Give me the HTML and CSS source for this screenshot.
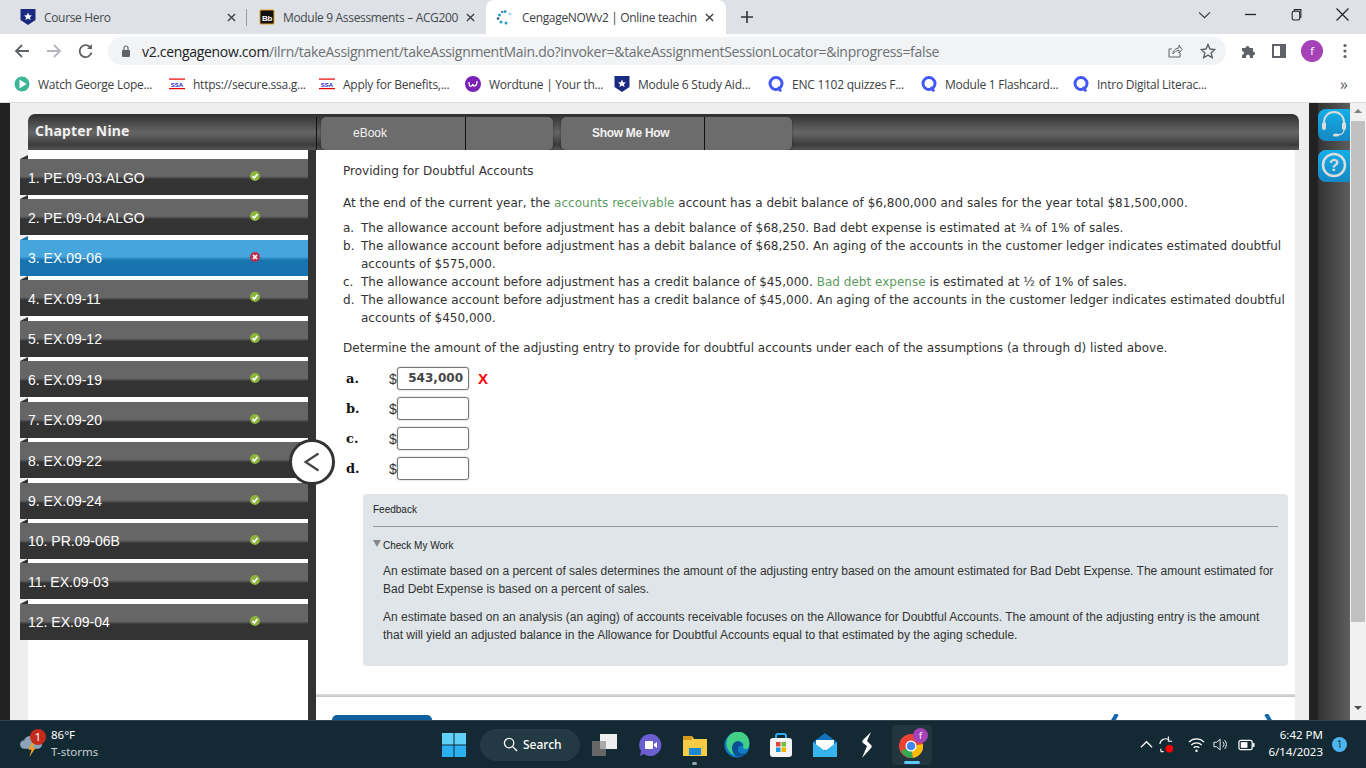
FILE: index.html
```html
<!DOCTYPE html>
<html lang="en">
<head>
<meta charset="utf-8">
<title>CengageNOWv2 | Online teaching</title>
<link rel="stylesheet" href="styles.css">
</head>
<body>
<svg class="defs" width="0" height="0">
  <symbol id="shield" viewBox="0 0 16 16"><path d="M0.500 0h15v11l-7.500 5-7.500-5z" fill="#1a2a80"/><path d="M8 3.500l1.200 2.700 2.800.2-2.100 1.900.7 2.800L8 9.600l-2.600 1.500.7-2.800-2.100-1.900 2.800-.2z" fill="#fff"/></symbol>
  <symbol id="quiz" viewBox="0 0 16 16"><circle cx="8" cy="7.500" r="6" fill="none" stroke="#4257f5" stroke-width="3"/><path d="M10 11l3 4.500" stroke="#4257f5" stroke-width="2.500"/></symbol>
  <symbol id="ok" viewBox="0 0 10 10"><circle cx="5" cy="5" r="5" fill="#8cb43c"/><path d="M2.500 5.200l1.800 1.800 3.200-4" fill="none" stroke="#fff" stroke-width="1.800"/></symbol>
  <symbol id="bad" viewBox="0 0 10 10"><circle cx="5" cy="5" r="5" fill="#b8304e"/><path d="M3 3l4 4M7 3l-4 4" fill="none" stroke="#fff" stroke-width="1.600"/></symbol>
</svg>

<div class="browser">
  <header class="tabstrip">
    <div class="tab tab-first">
      <svg class="ico16"><use href="#shield"/></svg>
      <span class="tab-title">Course Hero</span>
      <svg class="tab-x" viewBox="0 0 10 10"><path d="M1 1l8 8M9 1l-8 8" stroke="#3c4043" stroke-width="1.500"/></svg>
    </div>
    <div class="tab tab-second">
      <svg class="ico16" viewBox="0 0 16 16"><rect x="1" y="1" width="14" height="14" rx="1" fill="#111" stroke="#e0a020"/><text x="8" y="11.500" class="bb-text">Bb</text></svg>
      <span class="tab-title">Module 9 Assessments – ACG200</span>
      <svg class="tab-x" viewBox="0 0 10 10"><path d="M1 1l8 8M9 1l-8 8" stroke="#3c4043" stroke-width="1.500"/></svg>
    </div>
    <div class="tab tab-active">
      <svg class="ico16" viewBox="0 0 16 16"><g fill="#2a9ccf"><circle cx="9" cy="2.500" r="1.500"/><circle cx="14" cy="5" r="1.300" fill="#8fd0ea"/><circle cx="3.500" cy="6" r="1.500"/><circle cx="2" cy="9.500" r="1.200" fill="#14506e"/><circle cx="5" cy="13" r="1.500"/><circle cx="10" cy="14" r="1.500"/><circle cx="6" cy="3" r="1" fill="#14506e"/></g></svg>
      <span class="tab-title">CengageNOWv2 | Online teachin</span>
      <svg class="tab-x" viewBox="0 0 10 10"><path d="M1 1l8 8M9 1l-8 8" stroke="#3c4043" stroke-width="1.500"/></svg>
    </div>
    <svg class="newtab" viewBox="0 0 12 12"><path d="M6 0v12M0 6h12" stroke="#333" stroke-width="1.600"/></svg>
    <div class="winctl">
      <svg class="win-ic" viewBox="0 0 12 12"><path d="M1 4l5 5 5-5" fill="none" stroke="#333"/></svg>
      <svg class="win-ic" viewBox="0 0 12 12"><path d="M1 6h10" stroke="#222" stroke-width="1.200"/></svg>
      <svg class="win-ic" viewBox="0 0 12 12"><rect x="2" y="3" width="7" height="8" rx="1.500" fill="none" stroke="#222"/><path d="M4 3V1.500h6v7H9" fill="none" stroke="#222"/></svg>
      <svg class="win-ic" viewBox="0 0 12 12"><path d="M0.500 .5l11 11M11.500 .5l-11 11" stroke="#222" stroke-width="1.100"/></svg>
    </div>
  </header>

  <nav class="toolbar">
    <svg class="tool-ic" viewBox="0 0 16 16"><path d="M15 8H2M8 2L2 8l6 6" fill="none" stroke="#5f6368" stroke-width="1.800"/></svg>
    <svg class="tool-ic" viewBox="0 0 16 16"><path d="M1 8h13M8 2l6 6-6 6" fill="none" stroke="#b4b7bb" stroke-width="1.800"/></svg>
    <svg class="tool-ic" viewBox="0 0 16 16"><path d="M13.500 9.500A6 6 0 1 1 12 4" fill="none" stroke="#5f6368" stroke-width="1.800"/><path d="M14 1v5H9z" fill="#5f6368"/></svg>
    <div class="omnibox">
      <svg class="lock" viewBox="0 0 10 12"><rect x="1" y="5" width="8" height="7" rx="1" fill="#5f6368"/><path d="M3 5V3a2 2 0 0 1 4 0v2" fill="none" stroke="#5f6368" stroke-width="1.200"/></svg>
      <span class="url"><span class="url-host">v2.cengagenow.com</span>/ilrn/takeAssignment/takeAssignmentMain.do?invoker=&amp;takeAssignmentSessionLocator=&amp;inprogress=false</span>
      <svg class="omni-share" viewBox="0 0 16 16"><path d="M5 6H2v8h11v-4" fill="none" stroke="#5f6368"/><path d="M6 11c0-4 3-6 6-6V2l3 4.500L12 10V7.500C9.500 7.500 7.500 8.500 6 11z" fill="none" stroke="#5f6368"/></svg>
      <svg class="omni-star" viewBox="0 0 16 16"><path d="M8 1.500l2 4.500 4.800.5-3.600 3.200 1 4.800L8 12.100 3.800 14.500l1-4.800L1.200 6.500 6 6z" fill="none" stroke="#5f6368" stroke-width="1.400"/></svg>
    </div>
    <svg class="ext-puzzle" viewBox="0 0 16 16"><path d="M2 5h3.500a2 2 0 1 1 4 0H13v3.500a2 2 0 1 1 0 4V15H9.500a2 2 0 1 0-3 0H2v-3a2 2 0 1 0 0-4z" fill="#5f6368"/></svg>
    <svg class="ext-panel" viewBox="0 0 14 14"><path d="M1 1h12v12H1z" fill="none" stroke="#5f6368" stroke-width="2"/><rect x="8" y="1" width="5" height="12" fill="#5f6368"/></svg>
    <span class="avatar">f</span>
    <svg class="dots" viewBox="0 0 4 16"><circle cx="2" cy="2.500" r="1.600" fill="#5f6368"/><circle cx="2" cy="8" r="1.600" fill="#5f6368"/><circle cx="2" cy="13.500" r="1.600" fill="#5f6368"/></svg>
  </nav>

  <nav class="bookmarks">
    <span class="bm bm-1"><svg class="ico16" viewBox="0 0 16 16"><circle cx="8" cy="8" r="7.500" fill="#3fb598"/><path d="M5.500 3.500L12.500 8l-7 4.500z" fill="#fff"/></svg>Watch George Lope...</span>
    <span class="bm bm-2"><svg class="ico16" viewBox="0 0 16 16"><rect x="0" y="2.500" width="16" height="1.200" fill="#e00"/><rect x="0" y="12" width="16" height="1.200" fill="#e00"/><text x="8" y="10.800" class="ssa-text">SSA</text></svg>https://secure.ssa.g...</span>
    <span class="bm bm-3"><svg class="ico16" viewBox="0 0 16 16"><rect x="0" y="2.500" width="16" height="1.200" fill="#e00"/><rect x="0" y="12" width="16" height="1.200" fill="#e00"/><text x="8" y="10.800" class="ssa-text">SSA</text></svg>Apply for Benefits,...</span>
    <span class="bm bm-4"><svg class="ico16" viewBox="0 0 16 16"><circle cx="8" cy="8" r="8" fill="#7a22b8"/><path d="M4 6c0 6 3 5 4 2 0 3 4 3 4-3" fill="none" stroke="#fff" stroke-width="1.300"/></svg>Wordtune | Your th...</span>
    <span class="bm bm-5"><svg class="ico16"><use href="#shield"/></svg>Module 6 Study Aid...</span>
    <span class="bm bm-6"><svg class="ico16"><use href="#quiz"/></svg>ENC 1102 quizzes F...</span>
    <span class="bm bm-7"><svg class="ico16"><use href="#quiz"/></svg>Module 1 Flashcard...</span>
    <span class="bm bm-8"><svg class="ico16"><use href="#quiz"/></svg>Intro Digital Literac...</span>
    <span class="bm-more">»</span>
  </nav>

  <main class="page">
    <div class="edge-left"></div>
    <div class="app">
      <div class="app-head">
        <h1 class="chapter">Chapter Nine</h1>
        <div class="head-tabs">
          <div class="tool-group"><span class="tool-label">eBook</span><span class="tool-rest"></span></div>
          <div class="tool-group"><span class="tool-label tool-label-wide">Show Me How</span><span class="tool-rest"></span></div>
        </div>
      </div>
      <div class="app-body">
        <aside class="sidebar">
          <div class="item"><span>1. PE.09-03.ALGO</span><svg class="status"><use href="#ok"/></svg></div>
          <div class="item"><span>2. PE.09-04.ALGO</span><svg class="status"><use href="#ok"/></svg></div>
          <div class="item item-current"><span>3. EX.09-06</span><svg class="status"><use href="#bad"/></svg></div>
          <div class="item"><span>4. EX.09-11</span><svg class="status"><use href="#ok"/></svg></div>
          <div class="item"><span>5. EX.09-12</span><svg class="status"><use href="#ok"/></svg></div>
          <div class="item"><span>6. EX.09-19</span><svg class="status"><use href="#ok"/></svg></div>
          <div class="item"><span>7. EX.09-20</span><svg class="status"><use href="#ok"/></svg></div>
          <div class="item"><span>8. EX.09-22</span><svg class="status"><use href="#ok"/></svg></div>
          <div class="item"><span>9. EX.09-24</span><svg class="status"><use href="#ok"/></svg></div>
          <div class="item"><span>10. PR.09-06B</span><svg class="status"><use href="#ok"/></svg></div>
          <div class="item"><span>11. EX.09-03</span><svg class="status"><use href="#ok"/></svg></div>
          <div class="item"><span>12. EX.09-04</span><svg class="status"><use href="#ok"/></svg></div>
        </aside>
        <section class="content">
          <p class="title">Providing for Doubtful Accounts</p>
          <p class="intro">At the end of the current year, the <span class="term">accounts receivable</span> account has a debit balance of $6,800,000 and sales for the year total $81,500,000.</p>
          <ol class="assume">
            <li><span class="mk">a.</span><span>The allowance account before adjustment has a debit balance of $68,250. Bad debt expense is estimated at ¾ of 1% of sales.</span></li>
            <li><span class="mk">b.</span><span>The allowance account before adjustment has a debit balance of $68,250. An aging of the accounts in the customer ledger indicates estimated doubtful accounts of $575,000.</span></li>
            <li><span class="mk">c.</span><span>The allowance account before adjustment has a credit balance of $45,000. <span class="term">Bad debt expense</span> is estimated at ½ of 1% of sales.</span></li>
            <li><span class="mk">d.</span><span>The allowance account before adjustment has a credit balance of $45,000. An aging of the accounts in the customer ledger indicates estimated doubtful accounts of $450,000.</span></li>
          </ol>
          <p class="determine">Determine the amount of the adjusting entry to provide for doubtful accounts under each of the assumptions (a through d) listed above.</p>
          <div class="answers">
            <div class="answer"><b class="ans-key">a.</b><span class="dollar">$</span><span class="field field-filled">543,000</span><b class="wrong">X</b></div>
            <div class="answer"><b class="ans-key">b.</b><span class="dollar">$</span><span class="field"></span></div>
            <div class="answer"><b class="ans-key">c.</b><span class="dollar">$</span><span class="field"></span></div>
            <div class="answer"><b class="ans-key">d.</b><span class="dollar">$</span><span class="field"></span></div>
          </div>
          <div class="feedback">
            <div class="fb-head">Feedback</div>
            <div class="fb-check"><span class="tri"></span>Check My Work</div>
            <p class="fb-p">An estimate based on a percent of sales determines the amount of the adjusting entry based on the amount estimated for Bad Debt Expense. The amount estimated for Bad Debt Expense is based on a percent of sales.</p>
            <p class="fb-p">An estimate based on an analysis (an aging) of accounts receivable focuses on the Allowance for Doubtful Accounts. The amount of the adjusting entry is the amount that will yield an adjusted balance in the Allowance for Doubtful Accounts equal to that estimated by the aging schedule.</p>
          </div>
          <div class="footer-rule"></div>
          <div class="footer-row">
            <span class="footer-btn"></span>
            <span class="footer-nav">
              <svg class="chev" viewBox="0 0 10 10"><path d="M8 0L2 10" stroke="#1268ae" stroke-width="4"/></svg>
              <svg class="chev" viewBox="0 0 10 10"><path d="M2 0l6 10" stroke="#1268ae" stroke-width="4"/></svg>
            </span>
          </div>
        </section>
      </div>
      <button class="collapse" aria-label="Collapse"><svg viewBox="0 0 20 20"><path d="M16.500 1.500L3.500 10l13 8.500" fill="none" stroke="#444" stroke-width="2.200"/></svg></button>
    </div>
    <div class="rail">
      <div class="rail-btn"><svg viewBox="0 0 32 32"><path d="M6 17v-4a10 10 0 0 1 20 0v4" fill="none" stroke="#ddd" stroke-width="1.800"/><rect x="4" y="13" width="4" height="8" rx="2" fill="#ddd"/><rect x="24" y="13" width="4" height="8" rx="2" fill="#ddd"/><path d="M26 21c0 3-3 5-7 5" fill="none" stroke="#ddd" stroke-width="1.300"/><ellipse cx="18" cy="26" rx="3" ry="1.600" fill="#ddd"/></svg></div>
      <div class="rail-btn"><svg viewBox="0 0 32 32"><circle cx="16" cy="15" r="11" fill="none" stroke="#ddd" stroke-width="2.500"/><text x="16" y="21" class="q-text">?</text></svg></div>
    </div>
    <div class="scrollbar">
      <span class="sb-up"></span>
      <span class="sb-thumb"></span>
      <span class="sb-down"></span>
    </div>
  </main>

  <footer class="taskbar">
    <div class="weather">
      <svg class="weather-ic" viewBox="0 0 24 24"><path d="M5 16a4 4 0 0 1 0-8 6 6 0 0 1 11-1 4.500 4.500 0 0 1 3 9z" fill="#8aa3b8"/><path d="M13 9l-4 8h3l-2 7 6-9h-3l2-6z" fill="#f0a020"/></svg>
      <span class="weather-badge">1</span>
      <div class="weather-text"><span class="temp">86°F</span><span class="cond">T-storms</span></div>
    </div>
    <div class="tb-center">
      <svg class="tb-win" viewBox="0 0 24 24"><g fill="#5fd0f8"><rect x="0" y="0" width="11.500" height="11.500"/><rect x="12.500" y="0" width="11.500" height="11.500"/></g><g fill="#2ab0f0"><rect x="0" y="12.500" width="11.500" height="11.500"/><rect x="12.500" y="12.500" width="11.500" height="11.500"/></g></svg>
      <div class="tb-search"><svg viewBox="0 0 16 16"><circle cx="6.500" cy="6.500" r="5" fill="none" stroke="#fff" stroke-width="1.400"/><path d="M10 10l5 5" stroke="#fff" stroke-width="1.500"/></svg><span>Search</span></div>
      <svg class="tb-ic tb-task" viewBox="0 0 26 24"><rect x="0" y="8" width="14" height="15" fill="#666"/><rect x="8" y="1" width="17" height="15" fill="#eee"/><rect x="8" y="8" width="6" height="8" fill="#aaa"/></svg>
      <svg class="tb-ic tb-meet" viewBox="0 0 24 24"><path d="M12 1a11 11 0 1 1-6 20l-4 2 1-5A11 11 0 0 1 12 1z" fill="#6b5fd0"/><rect x="7" y="8" width="8" height="8" rx="1" fill="#fff"/><path d="M16 11l3-2v6l-3-2z" fill="#fff"/></svg>
      <span class="tb-folder">
        <svg class="tb-ic tb-explorer" viewBox="0 0 26 24"><path d="M1 3h9l2 3h13v17H1z" fill="#f7cc45"/><rect x="1" y="3" width="9" height="4" fill="#d59a1e"/><rect x="7" y="15" width="12" height="7" fill="#1a88d8"/></svg>
        <span class="folder-dot"></span>
      </span>
      <svg class="tb-ic tb-edge" viewBox="0 0 26 26"><circle cx="13" cy="13" r="12.500" fill="#0f7cc8"/><path d="M3 8a11 11 0 0 1 22 6c0 3-4 4-6 2 2-5-3-8-7-6-5 2-5 9-1 13C5 22 1 14 3 8z" fill="#42d087"/><path d="M11 10c-4 3-4 10 1 14 4 1 8 0 11-3-5 2-10 0-9-5 1-3 3-3 5-2-1-3-5-6-8-4z" fill="#0c4f96"/></svg>
      <svg class="tb-ic tb-store" viewBox="0 0 24 26"><path d="M7 7V4a2 2 0 0 1 2-2h6a2 2 0 0 1 2 2v3" fill="none" stroke="#2ab0f0" stroke-width="2"/><rect x="1" y="6" width="22" height="19" rx="3" fill="#f4f4f4"/><rect x="7" y="10" width="4.500" height="4.500" fill="#ea4335"/><rect x="12.500" y="10" width="4.500" height="4.500" fill="#6bbf3a"/><rect x="7" y="15.500" width="4.500" height="4.500" fill="#1a98e0"/><rect x="12.500" y="15.500" width="4.500" height="4.500" fill="#f7b500"/></svg>
      <svg class="tb-ic tb-mail" viewBox="0 0 26 26"><path d="M13 1L1 10v15h24V10z" fill="#1472b8"/><path d="M4 8h18v10H4z" fill="#fff"/><path d="M1 10l12 9 12-9v15H1z" fill="#35b4ee"/></svg>
      <svg class="tb-ic tb-s" viewBox="0 0 14 26"><path d="M11 0L3 8c-1 1-1 2 0 3l4 3-5 12 9-10c1-1 1-2 0-3L7 9z" fill="#fff"/></svg>
      <div class="tb-chrome">
        <svg viewBox="0 0 24 24"><circle cx="12" cy="12" r="12" fill="#ea4335"/><path d="M12 12L2 17A12 12 0 0 0 14 24z" fill="#34a853"/><path d="M12 12l2 12A12 12 0 0 0 24 10z" fill="#fbbc05"/><circle cx="12" cy="12" r="5.500" fill="#fff"/><circle cx="12" cy="12" r="4.300" fill="#4285f4"/></svg>
        <span class="chrome-f">f</span>
        <span class="chrome-bar"></span>
      </div>
    </div>
    <div class="tray">
      <svg class="tray-ic tray-up" viewBox="0 0 14 14"><path d="M1 10l6-6 6 6" fill="none" stroke="#fff" stroke-width="1.300"/></svg>
      <svg class="tray-ic tray-sync" viewBox="0 0 18 20"><path d="M2 9a6 6 0 0 1 10-4M3 14v3M3 17h3" fill="none" stroke="#fff" stroke-width="1.200"/><path d="M11 1v5h4" fill="none" stroke="#fff" stroke-width="1.200"/><circle cx="12" cy="14" r="4" fill="#f00"/></svg>
      <svg class="tray-ic tray-wifi" viewBox="0 0 18 16"><path d="M1 5a11 11 0 0 1 16 0M3.500 8a8 8 0 0 1 11 0M6 11a4 4 0 0 1 6 0" fill="none" stroke="#fff" stroke-width="1.300"/><circle cx="9" cy="14" r="1.300" fill="#fff"/></svg>
      <svg class="tray-ic tray-vol" viewBox="0 0 18 16"><path d="M1 5.500h3L8 2v12l-4-3.500H1z" fill="none" stroke="#fff"/><path d="M11 5a4 4 0 0 1 0 6M13 3a7 7 0 0 1 0 10" fill="none" stroke="#fff"/></svg>
      <svg class="tray-ic tray-batt" viewBox="0 0 18 14"><rect x="1" y="2" width="14" height="10" rx="2" fill="none" stroke="#fff" stroke-width="1.300"/><rect x="3" y="4" width="7" height="6" fill="#fff"/><rect x="15.500" y="5" width="2" height="4" fill="#fff"/></svg>
      <div class="clock"><span>6:42 PM</span><span>6/14/2023</span></div>
      <span class="notif">1</span>
    </div>
  </footer>
</div>
</body>
</html>
```
FILE: styles.css
```css
* { box-sizing: border-box; }
html, body { margin: 0; padding: 0; height: 768px; overflow: hidden; }
body { font-family: "Open Sans", "Noto Sans", sans-serif; }
.defs { position: absolute; }
.browser { display: flex; flex-direction: column; width: 1366px; height: 768px; }

/* tab strip */
.tabstrip { display: flex; align-items: center; height: 34px; background: #dee1e6; flex: none; position: relative; }
.tab { display: flex; align-items: center; height: 34px; font-size: 12px; letter-spacing: -.33px; color: #45494e; position: relative; flex: none; }
.tab-first { width: 247px; padding: 0 11px 0 20px; }
.tab-second { width: 239px; padding: 0 11px 0 12px; }
.tab-first::after { content: ""; position: absolute; right: 0; top: 9px; height: 17px; width: 1px; background: #9a9da1; }
.tab-active { width: 240px; padding: 0 12px 0 10px; background: #fff; border-radius: 8px 8px 0 0; color: #3c4043; }
.tab .ico16 { width: 16px; height: 16px; margin-right: 8px; flex: none; }
.tab-active .ico16 { margin-right: 10px; }
.tab-title { flex: 1; white-space: nowrap; }
.tab-x { width: 9px; height: 9px; flex: none; }
.bb-text { font: bold 8px "Liberation Sans", sans-serif; fill: #fff; text-anchor: middle; }
.newtab { width: 12px; height: 12px; margin-left: 15px; flex: none; }
.winctl { margin-left: auto; display: flex; align-items: center; gap: 33px; padding-right: 17px; margin-top: -6px; }
.win-ic { width: 13px; height: 13px; }

/* toolbar */
.toolbar { display: flex; align-items: center; height: 34px; background: #fff; flex: none; padding: 0 14px 0 14px; }
.tool-ic { width: 16px; height: 16px; margin-right: 16px; flex: none; }
.omnibox { display: flex; align-items: center; width: 1118px; height: 28px; margin-left: -2px; border-radius: 14px; background: #f1f3f4; padding: 0 10px 0 13px; flex: none; }
.lock { width: 10px; height: 12px; margin-right: 11px; flex: none; }
.url { font-size: 14px; color: #6c7075; white-space: nowrap; flex: 1; letter-spacing: -.31px; }
.url-host { color: #202124; }
.omni-share { width: 16px; height: 16px; margin-right: 17px; }
.omni-star { width: 16px; height: 16px; }
.ext-puzzle { width: 16px; height: 16px; margin-left: 14px; flex: none; }
.ext-panel { width: 14px; height: 14px; margin-left: 16px; flex: none; }
.avatar { width: 22px; height: 22px; margin-left: 15px; border-radius: 50%; background: #a642b8; color: #fff; font-size: 11px; text-align: center; line-height: 22px; flex: none; }
.dots { width: 4px; height: 16px; margin-left: 20px; flex: none; }

/* bookmarks */
.bookmarks { display: flex; align-items: center; height: 35px; background: #fff; border-bottom: 1px solid #d8dade; padding: 0 0 2px 14px; flex: none; font-size: 12px; letter-spacing: -.25px; color: #3c4043; }
.bm { display: flex; align-items: center; white-space: nowrap; flex: none; }
.bm .ico16 { width: 16px; height: 16px; margin-right: 8px; flex: none; }
.ssa-text { font: bold 6px "Liberation Sans", sans-serif; fill: #1a28d0; text-anchor: middle; letter-spacing: 0; }
.bm-1 { width: 155px; }
.bm-2 { width: 150px; }
.bm-3 { width: 146px; }
.bm-4 { width: 149px; }
.bm-5 { width: 154px; }
.bm-6 { width: 153px; }
.bm-7 { width: 152px; }
.bm-8 { width: 267px; }
.bm-more { font-size: 16px; color: #5f6368; }

/* page */
.page { flex: 1; display: flex; min-height: 0; overflow: hidden; background: #eee; position: relative; }
.edge-left { width: 10px; background: #222; flex: none; }
.app { width: 1299px; padding: 11px 10px 0 18px; flex: none; display: flex; flex-direction: column; position: relative; }
.app-head { display: flex; height: 36px; flex: none; background: linear-gradient(#2f2f2f 0, #4a4a4a 25%, #666 52%, #3c3c3c 85%, #555 100%); border-radius: 7px 7px 0 0; }
.chapter { width: 288px; margin: 0; padding: 0 0 0 7px; font: bold 14px/33px "Noto Sans", "Open Sans", sans-serif; color: #f0f0f0; letter-spacing: .15px; flex: none; }
.head-tabs { flex: 1; display: flex; gap: 8px; padding-left: 4px; border-left: 1px solid #111; align-items: stretch; margin-top: 3px; }
.tool-group { width: 232px; background: #6c6c6c; border-radius: 5px; display: flex; box-shadow: 0 1px 3px rgba(0,0,0,.4); font: bold 12px "Liberation Sans", sans-serif; color: #f2f2f2; }
.tool-group:last-child { width: 231px; }
.tool-label { width: 145px; padding-left: 32px; line-height: 33px; border-right: 1px solid #111; font-weight: normal; }
.tool-label-wide { width: 144px; padding-left: 31px; font-weight: bold; letter-spacing: -.3px; }
.tool-rest { flex: 1; }

.app-body { flex: 1; display: flex; min-height: 0; background: #fff; }
.sidebar { width: 288px; flex: none; border-right: 8px solid #333; padding-top: 9px; display: flex; flex-direction: column; gap: 4.450px; }
.item { height: 36px; width: 288px; margin-left: -8px; flex: none; position: relative; display: flex; align-items: center; padding: 1px 0 0 8px; font: 14px "Liberation Sans", sans-serif; color: #fff; background: linear-gradient(#666 0, #666 48%, #333 56%, #333 100%); }
.item::before { content: ""; position: absolute; left: 0; top: -4px; border-style: solid; border-width: 0 0 4px 8px; border-color: transparent transparent #333 transparent; }
.item-current { background: linear-gradient(#46a5dd 0, #46a5dd 46%, #1874ae 56%, #1874ae 100%); }
.item-current::before { border-bottom-color: #1874ae; }
.status { position: absolute; left: 230px; top: 12px; width: 10px; height: 10px; }

.content { flex: 1; min-width: 0; padding: 0 0 0 27px; font: 12px/18px "DejaVu Sans", "Liberation Sans", sans-serif; letter-spacing: .02px; color: #333; border-right: 4px solid #ccc; border-image: linear-gradient(90deg, #bbb, #eee) 1; display: flex; flex-direction: column; }
.content p { margin: 0; }
.title { padding-top: 12px; }
.intro { margin-top: 14px !important; }
.term { color: #5d9b63; }
.assume { list-style: none; margin: 7px 0 0; padding: 0; }
.assume li { display: flex; padding-right: 8px; }
.mk { width: 18px; flex: none; }
.determine { margin-top: 12px !important; }
.answers { margin-top: 10px; padding-left: 3px; display: flex; flex-direction: column; gap: 6.500px; }
.answer { display: flex; align-items: center; height: 23.500px; }
.ans-key { width: 43px; font: bold 13px "DejaVu Serif", "Liberation Serif", serif; color: #111; flex: none; }
.dollar { font: 14px "Liberation Sans", sans-serif; width: 8px; flex: none; }
.field { width: 72px; height: 23px; border: 1px solid #777; border-radius: 3px; background: #fff; box-shadow: 0 0 2px rgba(0,0,0,.3); flex: none; font: bold 12px/21px "DejaVu Sans", sans-serif; color: #444; padding-right: 5px; text-align: right; }
.wrong { margin-left: 9px; color: #f00; font: bold 15px "Liberation Sans", sans-serif; }
.feedback { margin: 13px 7px 0 20px; height: 172px; background: #dfe5e8; border-radius: 4px; padding: 0 10px; font: 12px/18px "Liberation Sans", sans-serif; letter-spacing: 0; color: #222; flex: none; }
.fb-head { font-size: 10px; height: 33px; line-height: 31px; border-bottom: 1px solid #999; }
.fb-check { font-size: 10px; line-height: 18px; margin-top: 10px; display: flex; align-items: center; gap: 2px; height: 18px; }
.tri { width: 0; height: 0; border-style: solid; border-width: 7px 4px 0 4px; border-color: #888 transparent transparent transparent; margin-top: -4px; }
.fb-p { padding-left: 10px; color: #333; }
.fb-check + .fb-p { margin-top: 7px !important; }
.fb-p + .fb-p { margin-top: 10px !important; }
.footer-rule { margin: 28px 0 0 -27px; height: 3px; background: linear-gradient(#ddd, #c4c4c4); flex: none; }
.footer-row { position: relative; display: flex; justify-content: space-between; margin: 18px 0 0 -11px; flex: none; }
.footer-btn { width: 100px; height: 20px; background: #0d5f9d; border-radius: 5px 5px 0 0; }
.footer-nav { display: flex; gap: 145px; padding-right: 21px; margin-top: -1px; }
.chev { width: 10px; height: 10px; }

.collapse { position: absolute; left: 279px; top: 336px; width: 46px; height: 46px; border-radius: 50%; border: 3px solid #333; background: #fff; padding: 10px; }
.collapse svg { width: 20px; height: 20px; display: block; }

.rail { width: 41px; flex: none; padding: 6px 0 0 9px; display: flex; flex-direction: column; gap: 9px; background: linear-gradient(90deg, #222 0, #222 9px, #333 9px, #5e5e5e 100%); }
.rail-btn { width: 32px; height: 32px; background: linear-gradient(#14aee8, #1688c4); border-radius: 8px 0 0 8px; }
.rail-btn svg { width: 32px; height: 32px; display: block; }
.q-text { font: bold 17px "Liberation Sans", sans-serif; fill: #ddd; text-anchor: middle; }
.scrollbar { width: 16px; flex: none; background: #f1f1f1; display: flex; flex-direction: column; align-items: center; }
.sb-up { margin-top: 6px; border-style: solid; border-width: 0 4px 4px; border-color: transparent transparent #808080; flex: none; }
.sb-thumb { width: 14px; height: 501px; margin-top: 8px; background: #c1c1c1; flex: none; }
.sb-down { margin-top: 84px; border-style: solid; border-width: 4px 4px 0; border-color: #505050 transparent transparent; flex: none; }

/* taskbar */
.taskbar { height: 48px; flex: none; background: #132a35; border-top: 1px solid #2c424d; display: flex; align-items: center; position: relative; color: #fff; font-family: "Noto Sans", "Open Sans", sans-serif; font-size: 11.500px; }
.weather { position: relative; width: 442px; display: flex; align-items: center; padding-left: 19px; flex: none; }
.weather-ic { width: 25px; height: 25px; margin-right: 7px; flex: none; }
.weather-badge { position: absolute; left: 30px; top: 0; width: 16px; height: 16px; border-radius: 50%; background: #c42b1c; text-align: center; line-height: 16px; font-size: 11px; }
.weather-text { display: flex; flex-direction: column; line-height: 17px; margin-top: -3px; }
.cond { color: #c8d0d4; }
.tb-center { display: flex; align-items: center; flex: none; width: 490px; }
.tb-win { width: 24px; height: 24px; flex: none; }
.tb-search { margin-left: 14px; width: 100px; height: 32px; background: #233a45; border-radius: 16px; display: flex; align-items: center; gap: 5px; padding-left: 23px; font-size: 12px; font-weight: 500; flex: none; }
.tb-search svg { width: 15px; height: 15px; flex: none; }
.tb-ic { flex: none; height: 26px; width: 26px; }
.tb-task { margin-left: 12px; }
.tb-meet { margin-left: 20px; width: 24px; }
.tb-folder { margin-left: 20px; width: 26px; height: 26px; position: relative; flex: none; }
.tb-explorer { display: block; }
.folder-dot { position: absolute; left: 10px; bottom: -7px; width: 5px; height: 3px; border-radius: 2px; background: #9aa5aa; }
.tb-edge { margin-left: 16px; }
.tb-store { margin-left: 19px; width: 24px; }
.tb-mail { margin-left: 19px; }
.tb-s { margin-left: 22px; width: 14px; }
.tb-chrome { margin-left: 18px; width: 40px; height: 40px; background: #21363f; border-radius: 4px; position: relative; flex: none; }
.tb-chrome svg { position: absolute; left: 7px; top: 9px; width: 24px; height: 24px; }
.chrome-f { position: absolute; left: 21px; top: 3px; width: 15px; height: 15px; border-radius: 50%; background: #a642b8; text-align: center; line-height: 15px; font-size: 9px; }
.chrome-bar { position: absolute; left: 12px; bottom: 1px; width: 16px; height: 3px; border-radius: 2px; background: #5cc8fa; }
.tray { flex: 1; display: flex; align-items: center; margin-left: -932px; padding-left: 1140px; }
.tray-ic { flex: none; }
.tray-up { width: 13px; height: 13px; }
.tray-sync { width: 17px; height: 20px; margin-left: 5px; }
.tray-wifi { width: 17px; height: 16px; margin-left: 13px; }
.tray-vol { width: 16px; height: 15px; margin-left: 8px; }
.tray-batt { width: 17px; height: 14px; margin-left: 9px; }
.clock { display: flex; flex-direction: column; align-items: flex-end; margin-left: auto; line-height: 17px; margin-top: -3px; }
.notif { margin: 0 19px 0 9px; width: 15px; height: 15px; background: #4cb4f0; color: #133; border-radius: 50%; text-align: center; line-height: 15px; font-size: 10px; flex: none; }
```
